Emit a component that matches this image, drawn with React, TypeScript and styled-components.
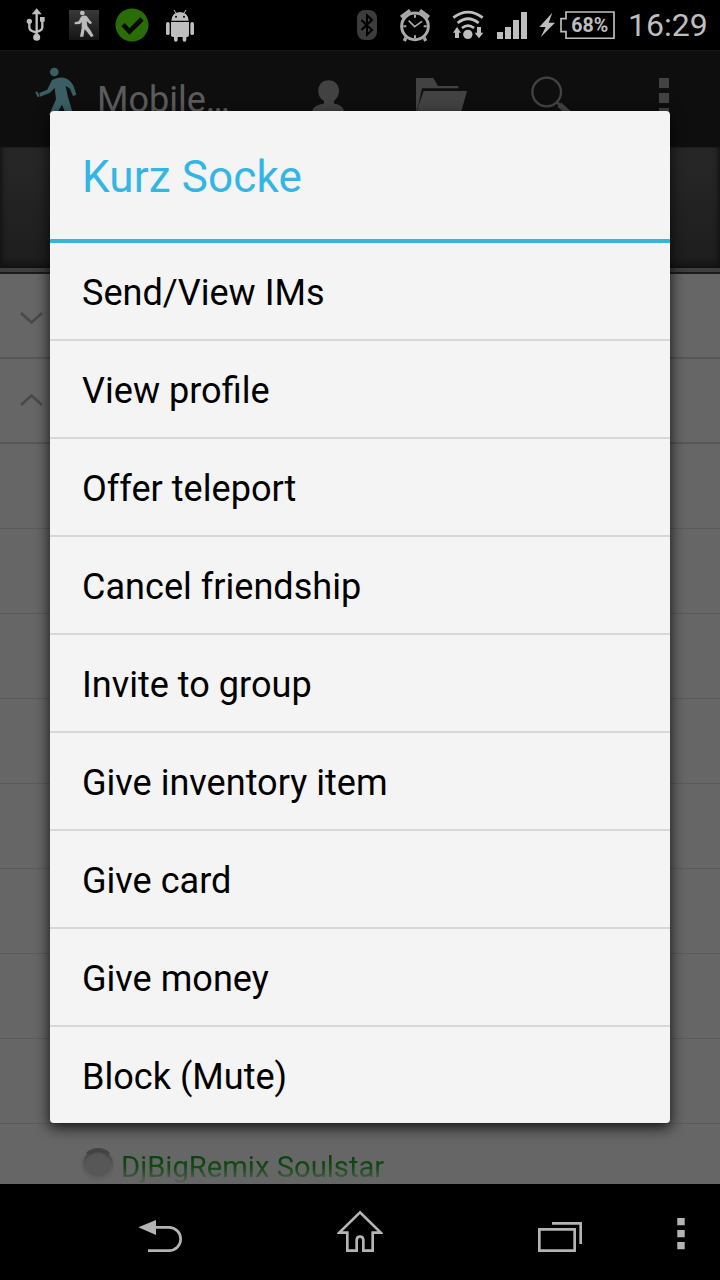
import React from "react";
import styled, { createGlobalStyle } from "styled-components";

const Global = createGlobalStyle`
  * { box-sizing: border-box; }
  body { margin: 0; background: #000; }
`;

const Screen = styled.div`
  position: relative;
  width: 720px;
  height: 1280px;
  overflow: hidden;
  display: flex;
  flex-direction: column;
  background: #000;
  font-family: Roboto, "Liberation Sans", sans-serif;
`;

const StatusBar = styled.header`
  flex: none;
  height: 50px;
  display: flex;
  align-items: flex-start;
  background: #000;
`;

const Icon = styled.svg<{ $left?: number; $top?: number }>`
  display: block;
  flex: none;
  margin-left: ${(p) => p.$left ?? 0}px;
  margin-top: ${(p) => p.$top ?? 0}px;
`;

const Clock = styled.time`
  margin-left: 13px;
  font-size: 32px;
  line-height: 51px;
  color: #bebebe;
  white-space: nowrap;
`;

const ActionBar = styled.div`
  flex: none;
  height: 96px;
  display: flex;
  align-items: flex-start;
  background: #0e0e0e;
  border-top: 1px solid #151515;
`;

const AppTitle = styled.h1`
  margin: 0 0 0 19px;
  width: 154px;
  font-size: 36px;
  font-weight: 400;
  line-height: 98px;
  color: #5b5b5b;
  white-space: nowrap;
`;

const TabPanel = styled.div`
  flex: none;
  height: 122px;
  background: linear-gradient(#0a0a0a 0, #262626 2px, #262626 20px, #1e1e1e 112px, #131313 122px);
  box-shadow: inset 6px 0 5px -4px #121212, inset -6px 0 5px -4px #121212;
`;

const PanelEdge = styled.div`
  flex: none;
  height: 6px;
  background: #3e3e3e;
  border-bottom: 2px solid #1b1b1b;
`;

const FriendList = styled.div`
  flex: 1;
  min-height: 0;
  overflow: hidden;
  background: #666;
`;

const FriendRow = styled.div<{ $height: number; $group?: boolean }>`
  height: ${(p) => p.$height}px;
  display: flex;
  align-items: ${(p) => (p.$group ? "flex-start" : "center")};
  border-bottom: ${(p) => (p.$group ? "2px solid #575757" : "1px solid #5a5a5a")};
`;

const Presence = styled.span`
  width: 34px;
  height: 33px;
  margin: 0 6px 4px 81px;
  border-radius: 50%;
  border: 2px solid #626262;
  border-top-color: #444;
  background: #575757;
  box-shadow: inset 0 3px 3px -1px #3a3a3a, inset 0 -1px 2px 1px #636363;
`;

const FriendName = styled.span`
  font-size: 29.200px;
  line-height: 36px;
  background: linear-gradient(#0a430d 8px, #124a14 18px, #5c645c 35px);
  background-clip: text;
  color: transparent;
`;

const NavBar = styled.nav`
  flex: none;
  height: 96px;
  display: flex;
  align-items: flex-start;
  background: #000;
`;

const Dialog = styled.section`
  position: absolute;
  left: 50px;
  top: 111px;
  width: 620px;
  border-radius: 4px;
  overflow: hidden;
  background: #f4f4f4;
`;

const DialogShadow = styled.div`
  position: absolute;
  left: 50px;
  top: 113px;
  width: 620px;
  height: 1010px;
  border-radius: 4px;
  box-shadow: 0 4px 14px 1px rgba(0, 0, 0, 0.75);
`;

const DialogTitle = styled.h2`
  margin: 0;
  height: 132px;
  padding-left: 32px;
  border-bottom: 4px solid #3db2d9;
  font-size: 44px;
  font-weight: 400;
  line-height: 132px;
  letter-spacing: 0.15px;
  color: #33b5e5;
`;

const Menu = styled.ul`
  margin: 0;
  padding: 0;
  list-style: none;
`;

const MenuItem = styled.li`
  height: 98px;
  padding-left: 32px;
  border-bottom: 2px solid #d7d7d7;
  font-size: 36.100px;
  line-height: 100px;
  color: #000;
  &:last-child {
    height: 96px;
    border-bottom: 0;
  }
`;

const items = [
  "Send/View IMs",
  "View profile",
  "Offer teleport",
  "Cancel friendship",
  "Invite to group",
  "Give inventory item",
  "Give card",
  "Give money",
  "Block (Mute)",
];

const Usb = () => (
  <Icon $left={26} $top={8} width="20" height="34" viewBox="78 24 60 102" fill="#bebebe">
    <path d="M110 25l15 18H95z" />
    <circle cx="110" cy="112" r="10.5" />
    <circle cx="88" cy="64" r="8" />
    <rect x="120" y="51" width="14" height="14" />
    <path d="M110 40V110M88 64V82Q88 90 96 93L110 98M127 62V82Q127 88 121 91L110 96" fill="none" stroke="#bebebe" strokeWidth="7" />
  </Icon>
);

const WalkerTile = () => (
  <Icon $left={23} $top={10} width="30" height="30" viewBox="0 0 90 90">
    <defs>
      <linearGradient id="tile" x1="0" y1="0" x2="0" y2="1">
        <stop offset="0" stopColor="#393939" />
        <stop offset="1" stopColor="#151515" />
      </linearGradient>
    </defs>
    <rect width="90" height="90" fill="url(#tile)" />
    <circle cx="40" cy="9" r="7" fill="#bbb" />
    <path d="M36 20Q45 14 53 18L60 28L69 38L64 43L53 34L55 48L64 60L74 78L66 81L55 67L47 58L43 80H33L38 54V36L33 42L17 43V37L29 34z" fill="#bbb" />
  </Icon>
);

const Check = () => (
  <Icon $left={16} $top={8} width="34" height="34" viewBox="0 0 34 34">
    <circle cx="17" cy="17" r="16.5" fill="#2a6c08" />
    <path d="M8 16.500L14.500 23.500L27 11" stroke="#050b02" strokeWidth="4.6" fill="none" />
  </Icon>
);

const Android = () => (
  <Icon $left={16} $top={9} width="30" height="33" viewBox="495 27 90 99" fill="#bebebe">
    <path d="M514 62Q516 37 540 36Q564 37 566 62z" />
    <path d="M522 30l8 12M558 30l-8 12" stroke="#bebebe" strokeWidth="3" />
    <circle cx="528" cy="50" r="3" fill="#000" />
    <circle cx="552" cy="50" r="3" fill="#000" />
    <path d="M513 66H567V105Q567 111 561 111H559V120Q559 125 553.500 125Q548 125 548 120V111H533V120Q533 125 527.500 125Q522 125 522 120V111H519Q513 111 513 105z" />
    <rect x="498" y="66" width="11" height="39" rx="5.500" />
    <rect x="571" y="66" width="11" height="39" rx="5.500" />
  </Icon>
);

const Bluetooth = () => (
  <Icon $left={162} $top={10} width="20" height="30" viewBox="51 30 60 90">
    <rect x="51" y="30" width="60" height="90" rx="24" fill="#3c3c3c" />
    <path d="M64 60L96 90L81 104V46L96 60L64 90" stroke="#000" strokeWidth="6" fill="none" />
  </Icon>
);

const Alarm = () => (
  <Icon $left={22} $top={9} width="32" height="34" viewBox="177 27 96 102" fill="none" stroke="#a9a9a9">
    <path d="M185 54L212 34M265 54L238 34" strokeWidth="17" />
    <path d="M199 110l-6 13M251 110l6 13" strokeWidth="10" />
    <circle cx="225" cy="79" r="44" fill="#000" stroke="none" />
    <circle cx="225" cy="79" r="40" strokeWidth="9" />
    <path d="M206 62L224 80L246 64" strokeWidth="5" />
    <path d="M225 44v9M225 106v9M190 79h9M251 79h9" strokeWidth="6" />
  </Icon>
);

const Wifi = () => (
  <Icon $left={21} $top={10} width="32" height="30" viewBox="336 30 96 90" fill="#bebebe">
    <path d="M340 53Q384 20 428 53M353 69Q384 44 416 69M366 84Q384 70 402 84" stroke="#bebebe" strokeWidth="8.5" fill="none" />
    <circle cx="383.500" cy="103" r="14" />
    <path d="M351 81L363 98H357V114H345V98H339z" />
    <path d="M417 115L430 98H423V81H411V98H404z" />
  </Icon>
);

const Signal = () => (
  <Icon $left={13} $top={12} width="30" height="27" viewBox="0 0 30 27" fill="#bebebe">
    <path d="M0 20h6v7H0zM8 15h6v12H8zM16 8h6v19h-6zM24 0h6v27h-6z" />
  </Icon>
);

const Battery = () => (
  <Icon $left={12} $top={11} width="76" height="28" viewBox="57 33 228 84">
    <path d="M97 38L58 81H77L62 112L105 68H86z" fill="#bebebe" />
    <path d="M138 36H282V115H138V95H123V56H138z" fill="none" stroke="#bebebe" strokeWidth="5" />
    <text x="154" y="96" fontSize="60" fontWeight="700" textLength="111" lengthAdjust="spacingAndGlyphs" fill="#bebebe">68%</text>
  </Icon>
);

const Logo = () => (
  <Icon $left={34} $top={16} width="44" height="56" viewBox="102 201 132 168" fill="#3a5e63">
    <circle cx="163" cy="216" r="13" />
    <path d="M156 240Q178 227 200 236Q217 245 222 262L229 284L219 288L210 266L197 257L203 288L220 345H199L186 314L168 345H147L168 298L164 264L150 278L120 290L118 279L142 269z" />
    <path d="M106 277l6-3 7 15-6 3z" />
  </Icon>
);

const Person = () => (
  <Icon $left={60} $top={28} width="34" height="40" viewBox="0 0 34 40" fill="#424242">
    <path d="M17.500 1.300C24 1.300 28 6 28 12C28 17 25 20 23 22V24.500C29 26 33 28 33 33V40H1.300V33C1.300 28 6 26 13 24.500V22C10 20 7.300 17 7.300 12C7.300 6 11 1.300 17.500 1.300z" />
  </Icon>
);

const Folder = () => (
  <Icon $left={70} $top={26} width="54" height="42" viewBox="225 231 162 126" fill="#424242">
    <path d="M228 234H280L294 258H355V265H246L236 312L228 340z" />
    <path d="M251 273H381L361 345H228L236 315z" />
  </Icon>
);

const Search = () => (
  <Icon $left={61} $top={25} width="50" height="44" viewBox="28 228 150 132" fill="none" stroke="#424242">
    <circle cx="78" cy="276" r="43" strokeWidth="7" />
    <path d="M108 307l10 8" strokeWidth="8" />
    <path d="M116 314l40 36" strokeWidth="17" />
  </Icon>
);

const Overflow = () => (
  <Icon $left={79} $top={27} width="10" height="40" viewBox="0 0 10 40" fill="#424242">
    <path d="M0 0h10v10H0zM0 15h10v10H0zM0 30h10v10H0z" />
  </Icon>
);

const Chevron = ({ up }: { up?: boolean }) => (
  <Icon $left={20} $top={up ? 34 : 37} width="24" height="14" viewBox="0 0 24 14" fill="none" stroke="#494949" strokeWidth="2.6">
    <path d={up ? "M1 12L11.500 2.500L22 12" : "M1 2L11.500 11.500L22 2"} />
  </Icon>
);

export default function App() {
  return (
    <>
      <Global />
      <Screen>
        <StatusBar>
          <Usb />
          <WalkerTile />
          <Check />
          <Android />
          <Bluetooth />
          <Alarm />
          <Wifi />
          <Signal />
          <Battery />
          <Clock>16:29</Clock>
        </StatusBar>
        <ActionBar>
          <Logo />
          <AppTitle>Mobile…</AppTitle>
          <Person />
          <Folder />
          <Search />
          <Overflow />
        </ActionBar>
        <TabPanel />
        <PanelEdge />
        <FriendList>
          <FriendRow $height={85} $group><Chevron /></FriendRow>
          <FriendRow $height={85} $group><Chevron up /></FriendRow>
          {Array.from({ length: 8 }, (_, i) => (
            <FriendRow key={i} $height={85} />
          ))}
          <FriendRow $height={86}>
            <Presence />
            <FriendName>DjBigRemix Soulstar</FriendName>
          </FriendRow>
        </FriendList>
        <NavBar>
          <Icon $left={138} $top={35} width="45" height="34" viewBox="414 387 135 102" fill="none" stroke="#b4b4b4" strokeWidth="8">
            <path d="M415 412L468 390V435z" fill="#b4b4b4" stroke="none" />
            <path d="M464 412H507A35 35 0 0 1 507 482H444" />
          </Icon>
          <Icon $left={154} $top={25} width="46" height="44" viewBox="1011 357 138 132" fill="none" stroke="#b4b4b4" strokeWidth="8">
            <path d="M1080 367L1018 428H1042V482H1070V451Q1070 440 1080 440Q1090 440 1090 451V482H1118V428H1142z" />
          </Icon>
          <Icon $left={155} $top={37} width="44" height="32" viewBox="414 393 132 96" fill="none" stroke="#b4b4b4" strokeWidth="8">
            <path d="M418 418H524V482H418zM456 400H542V462" />
          </Icon>
          <Icon $left={95} $top={34} width="8" height="32" viewBox="0 0 8 32" fill="#b4b4b4">
            <path d="M0.300 0h7.400v7.300H0.300zM0.300 12h7.400v7.300H0.300zM0.300 24h7.400v7.300H0.300z" />
          </Icon>
        </NavBar>
        <DialogShadow />
        <Dialog>
          <DialogTitle>Kurz Socke</DialogTitle>
          <Menu>
            {items.map((label) => (
              <MenuItem key={label}>{label}</MenuItem>
            ))}
          </Menu>
        </Dialog>
      </Screen>
    </>
  );
}
